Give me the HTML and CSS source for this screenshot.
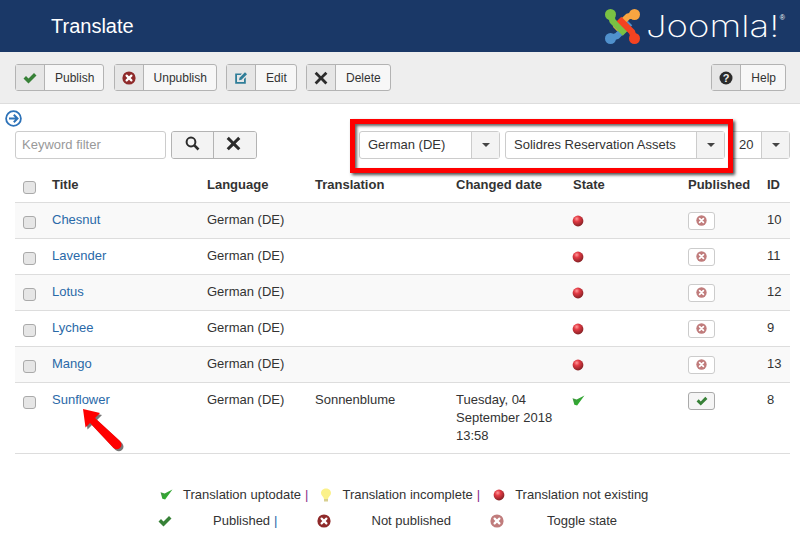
FILE: index.html
```html
<!DOCTYPE html>
<html lang="en">
<head>
<meta charset="utf-8">
<title>Translate</title>
<link rel="stylesheet" href="styles.css">
</head>
<body>
<svg class="defs" width="0" height="0" aria-hidden="true">
  <defs>
    <radialGradient id="ball" cx="0.38" cy="0.3" r="0.75">
      <stop offset="0" stop-color="#ff9a9a"/>
      <stop offset="0.35" stop-color="#e33a44"/>
      <stop offset="1" stop-color="#7c1f22"/>
    </radialGradient>
    <linearGradient id="greencheck" x1="0" y1="0" x2="1" y2="1">
      <stop offset="0" stop-color="#4a8a4a"/>
      <stop offset="1" stop-color="#1ec01e"/>
    </linearGradient>
    <symbol id="check" viewBox="0 0 14 12"><path d="M0.5 6.5 L3 4 L5.5 6.5 L11 1 L13.5 3.5 L5.5 11.5 Z" fill="currentColor"/></symbol>
    <symbol id="xcircle" viewBox="0 0 14 14"><circle cx="7" cy="7" r="6.6" fill="currentColor"/><path d="M4.6 4.6 L9.4 9.4 M9.4 4.6 L4.6 9.4" stroke="#fff" stroke-width="2.2" stroke-linecap="round"/></symbol>
    <symbol id="times" viewBox="0 0 14 14"><path d="M2.6 0.8 L7 5.2 L11.4 0.8 L13.4 2.8 L9 7.1 L13.4 11.4 L11.4 13.4 L7 9 L2.6 13.4 L0.6 11.4 L5 7.1 L0.6 2.8 Z" fill="currentColor"/></symbol>
    <symbol id="redball" viewBox="0 0 12 12"><circle cx="6" cy="6" r="5.4" fill="url(#ball)"/></symbol>
    <symbol id="tick" viewBox="0 0 14 12"><path d="M0.5 3.5 L5 5 L13.5 0.5 L5.5 11.5 L2.5 10.5 Z" fill="url(#greencheck)"/></symbol>
  </defs>
</svg>

<header class="topbar">
  <h1 class="page-title">Translate</h1>
  <div class="brand">
    <svg class="brand-mark" viewBox="0 0 37 37" width="37" height="37" aria-hidden="true">
      <g fill="none" stroke-width="6.4" stroke-linejoin="round">
        <path d="M7 30 L13 28 L26 15" stroke="#5091cd"/>
        <path d="M30 7 L24 8.5 L11 21" stroke="#f9a541"/>
        <path d="M7 7 L8.5 13 L21 25.5" stroke="#7ac143"/>
        <path d="M30 30 L28 24 L15 11" stroke="#f44321"/>
      </g>
      <circle cx="6.5" cy="6.5" r="5.5" fill="#7ac143"/>
      <circle cx="30.5" cy="6.5" r="5.5" fill="#f9a541"/>
      <circle cx="6.5" cy="30.5" r="5.5" fill="#5091cd"/>
      <circle cx="30.5" cy="30.5" r="5.5" fill="#f44321"/>
    </svg>
    <span class="brand-word">Joomla!</span><sup class="brand-reg">®</sup>
  </div>
</header>

<nav class="toolbar">
  <button class="tool"><span class="tool-icon c-green"><svg width="14" height="12"><use href="#check"/></svg></span><span class="tool-label">Publish</span></button>
  <button class="tool"><span class="tool-icon c-red"><svg width="14" height="14"><use href="#xcircle"/></svg></span><span class="tool-label">Unpublish</span></button>
  <button class="tool"><span class="tool-icon c-teal">
    <svg width="14" height="14" viewBox="0 0 14 14"><path d="M1.5 2.5 H8 L6.5 4 H3 V11 H10 V8 L11.8 6.2 V12.8 H1.2 V2.5 Z" fill="currentColor"/><path d="M5.5 6.8 L11 1.2 L13 3.2 L7.5 8.8 L5 9.3 Z" fill="currentColor"/></svg>
  </span><span class="tool-label">Edit</span></button>
  <button class="tool"><span class="tool-icon c-dark"><svg width="14" height="14"><use href="#times"/></svg></span><span class="tool-label">Delete</span></button>
  <button class="tool tool-end"><span class="tool-icon c-dark">
    <svg width="14" height="14" viewBox="0 0 14 14"><circle cx="7" cy="7" r="6.5" fill="currentColor"/><text x="7" y="10.6" text-anchor="middle" class="q-mark">?</text></svg>
  </span><span class="tool-label">Help</span></button>
</nav>

<main class="content">
  <div class="back-row">
    <svg width="17" height="17" viewBox="0 0 17 17"><circle cx="8.5" cy="8.5" r="7.4" fill="#fff" stroke="#2d72b8" stroke-width="1.8"/><path d="M4 8.5 H12 M8.8 4.8 L12.5 8.5 L8.8 12.2" fill="none" stroke="#2d72b8" stroke-width="2"/></svg>
  </div>
  <div class="filters">
    <div class="search">
      <input class="keyword" type="text" placeholder="Keyword filter">
      <div class="btn-group">
        <button class="icon-btn">
          <svg width="15" height="15" viewBox="0 0 15 15"><circle cx="6" cy="6" r="4.4" fill="none" stroke="#2b2b2b" stroke-width="2"/><path d="M9.4 9.4 L13.5 13.5" stroke="#2b2b2b" stroke-width="2.6"/></svg>
        </button>
        <button class="icon-btn c-dark"><svg width="15" height="15"><use href="#times"/></svg></button>
      </div>
    </div>
    <div class="selects">
      <div class="select s-lang"><span class="select-val">German (DE)</span><span class="select-arrow"></span></div>
      <div class="select s-type"><span class="select-val">Solidres Reservation Assets</span><span class="select-arrow"></span></div>
      <div class="select s-num"><span class="select-val">20</span><span class="select-arrow"></span></div>
    </div>
  </div>
  <div class="callout"></div>

  <table class="list">
    <colgroup>
      <col class="w-check"><col class="w-title"><col class="w-lang"><col class="w-trans"><col class="w-date"><col class="w-state"><col class="w-pub"><col class="w-id">
    </colgroup>
    <thead>
      <tr><th><span class="cb"></span></th><th>Title</th><th>Language</th><th>Translation</th><th>Changed date</th><th>State</th><th>Published</th><th>ID</th></tr>
    </thead>
    <tbody>
      <tr class="odd"><td class="cb-cell"><span class="cb"></span></td><td><a href="#">Chesnut</a></td><td>German (DE)</td><td></td><td></td><td class="ic"><svg width="12" height="12"><use href="#redball"/></svg></td><td class="pub"><span class="pill off"><svg width="11" height="11"><use href="#xcircle"/></svg></span></td><td>10</td></tr>
      <tr><td class="cb-cell"><span class="cb"></span></td><td><a href="#">Lavender</a></td><td>German (DE)</td><td></td><td></td><td class="ic"><svg width="12" height="12"><use href="#redball"/></svg></td><td class="pub"><span class="pill off"><svg width="11" height="11"><use href="#xcircle"/></svg></span></td><td>11</td></tr>
      <tr class="odd"><td class="cb-cell"><span class="cb"></span></td><td><a href="#">Lotus</a></td><td>German (DE)</td><td></td><td></td><td class="ic"><svg width="12" height="12"><use href="#redball"/></svg></td><td class="pub"><span class="pill off"><svg width="11" height="11"><use href="#xcircle"/></svg></span></td><td>12</td></tr>
      <tr><td class="cb-cell"><span class="cb"></span></td><td><a href="#">Lychee</a></td><td>German (DE)</td><td></td><td></td><td class="ic"><svg width="12" height="12"><use href="#redball"/></svg></td><td class="pub"><span class="pill off"><svg width="11" height="11"><use href="#xcircle"/></svg></span></td><td>9</td></tr>
      <tr class="odd"><td class="cb-cell"><span class="cb"></span></td><td><a href="#">Mango</a></td><td>German (DE)</td><td></td><td></td><td class="ic"><svg width="12" height="12"><use href="#redball"/></svg></td><td class="pub"><span class="pill off"><svg width="11" height="11"><use href="#xcircle"/></svg></span></td><td>13</td></tr>
      <tr class="last"><td class="cb-cell"><span class="cb"></span></td><td><a href="#">Sunflower</a></td><td>German (DE)</td><td>Sonnenblume</td><td class="date">Tuesday, 04 September 2018 13:58</td><td class="tick-cell"><svg width="13" height="11"><use href="#tick"/></svg></td><td class="pub"><span class="pill on"><svg width="12" height="10"><use href="#check"/></svg></span></td><td>8</td></tr>
    </tbody>
  </table>
  <svg class="arrow" width="48" height="48" viewBox="0 0 48 48" aria-hidden="true">
    <path d="M1 1 L18 5 L13 10 L38 33 Q41 37 38 40 Q35 42.5 31.5 40 L8 15 L3.5 19.5 Z" fill="#1c1c1c" opacity="0.6" transform="translate(2 2)"/>
    <path d="M1 1 L18 5 L13 10 L38 33 Q41 37 38 40 Q35 42.5 31.5 40 L8 15 L3.5 19.5 Z" fill="#f00"/>
  </svg>

  <div class="legend">
    <div class="legend-row r1">
      <svg class="lg-tick" width="13" height="11"><use href="#tick"/></svg><span class="lg-text">Translation uptodate</span><span class="sep-purple">|</span>
      <svg class="lg-bulb" width="12" height="14" viewBox="0 0 12 14"><path d="M6 0.5 C2.5 0.5 1 3 1 5 C1 7.5 3.5 8.5 4 11 H8 C8.5 8.5 11 7.5 11 5 C11 3 9.5 0.5 6 0.5 Z" fill="#fbf18a"/><rect x="4" y="11" width="4" height="2.5" fill="#d8cf90"/></svg><span class="lg-text">Translation incomplete</span><span class="sep-purple">|</span>
      <svg class="lg-ball" width="12" height="12"><use href="#redball"/></svg><span class="lg-text">Translation not existing</span>
    </div>
    <div class="legend-row r2">
      <svg class="c-green" width="14" height="12"><use href="#check"/></svg><span class="lg-text t-pub">Published</span><span class="sep-blue">|</span>
      <svg class="c-red x-red" width="14" height="14"><use href="#xcircle"/></svg><span class="lg-text t-not">Not published</span>
      <svg class="c-fade x-fade" width="14" height="14"><use href="#xcircle"/></svg><span class="lg-text t-tog">Toggle state</span>
    </div>
  </div>
</main>
</body>
</html>
```
FILE: styles.css
```css
* { box-sizing: border-box; }
html, body { margin: 0; padding: 0; }
body {
  width: 800px;
  height: 540px;
  overflow: hidden;
  background: #fff;
  color: #333;
  font-family: "Liberation Sans", Arial, sans-serif;
  font-size: 13px;
  line-height: 18px;
}
.defs { position: absolute; }
.c-green { color: #378137; }
.c-red { color: #8f2a2a; }
.c-teal { color: #2f7d98; }
.c-dark { color: #2b2b2b; }
.c-fade { color: #c07c7c; }

.topbar {
  height: 52px;
  background: #1a3867;
  display: flex;
  align-items: center;
  justify-content: space-between;
  padding: 0 15px 0 51px;
}
.page-title {
  margin: 0;
  color: #fff;
  font-size: 20px;
  font-weight: 400;
  line-height: 52px;
}
.brand { display: flex; align-items: center; color: #fff; }
.brand-mark { margin-right: 5px; }
.brand-word {
  display: block;
  width: 134px;
  font-family: "Inter", sans-serif;
  font-weight: 200;
  font-size: 30px;
  line-height: 52px;
  white-space: nowrap;
  transform: scaleX(1.22);
  transform-origin: left center;
}
.brand-reg { font-size: 7px; line-height: 8px; align-self: flex-start; margin-top: 14px; }

.toolbar {
  height: 52px;
  background: #eee;
  border-bottom: 1px solid #ddd;
  display: flex;
  align-items: center;
  gap: 9.2px;
  padding: 0 14px 0 15px;
}
.tool {
  display: flex;
  align-items: stretch;
  height: 27px;
  padding: 0;
  background: #f7f7f7;
  border: 1px solid #b3b3b3;
  border-radius: 3px;
  font: inherit;
  font-size: 12px;
  color: #333;
}
.tool-end { margin-left: auto; }
.tool-icon {
  width: 29px;
  background: #e6e6e6;
  border-right: 1px solid #b3b3b3;
  display: flex;
  align-items: center;
  justify-content: center;
}
.tool-label { padding: 0 9px 0 10px; line-height: 27px; }
.q-mark { fill: #eee; font-size: 11px; font-weight: 700; font-family: "Liberation Sans", sans-serif; }

.content { position: relative; padding: 0 10px 0 15px; }
.back-row { height: 27px; margin-left: -10px; padding-top: 6px; }
.back-row svg { display: block; }
.filters {
  display: flex;
  justify-content: space-between;
  height: 28px;
}
.search { display: flex; gap: 5px; }
.keyword {
  width: 151px;
  height: 28px;
  padding: 0 6px 2px;
  border: 1px solid #ccc;
  border-radius: 3px;
  font: inherit;
  color: #333;
}
.keyword::placeholder { color: #999; opacity: 1; }
.btn-group { display: flex; height: 28px; border: 1px solid #b3b3b3; border-radius: 3px; overflow: hidden; }
.icon-btn {
  width: 41px;
  padding: 0 0 3px;
  border: 0;
  background: #f3f3f3;
  display: flex;
  align-items: center;
  justify-content: center;
}
.icon-btn + .icon-btn { width: 43px; padding-right: 3px; border-left: 1px solid #b3b3b3; }
.selects { display: flex; gap: 5px; }
.select {
  display: flex;
  height: 28px;
  border: 1px solid #ccc;
  border-radius: 3px;
  background: #fff;
  line-height: 26px;
}
.s-lang { width: 141px; }
.s-type { width: 220px; }
.s-num { width: 60px; }
.select-val { flex: 1; padding-left: 8px; }
.select-arrow {
  width: 28px;
  background: #f3f3f3;
  border-left: 1px solid #ccc;
  position: relative;
}
.select-arrow::after {
  content: "";
  position: absolute;
  left: 10px;
  top: 11px;
  border: 4px solid transparent;
  border-top-color: #444;
  border-bottom: 0;
}
.callout {
  position: absolute;
  left: 350px;
  top: 15px;
  width: 383px;
  height: 54px;
  border: 5px solid #f00;
  box-shadow: 2px 2px 3px rgba(0,0,0,0.7), inset 2px 2px 3px rgba(0,0,0,0.6);
  pointer-events: none;
}

.list {
  width: 775px;
  margin-top: 11px;
  border-collapse: collapse;
  table-layout: fixed;
}
.w-check { width: 37px; }
.w-title { width: 155px; }
.w-lang { width: 108px; }
.w-trans { width: 141px; }
.w-date { width: 117px; }
.w-state { width: 115px; }
.w-pub { width: 79px; }
.w-id { width: 23px; }
.list th {
  height: 32px;
  padding: 0 0 2px;
  text-align: left;
  font-weight: 700;
  vertical-align: middle;
}
.list td {
  height: 36px;
  padding: 8px 0 0;
  border-top: 1px solid #ddd;
  vertical-align: top;
  line-height: 18px;
}
.list tr.odd td { background: #f9f9f9; }
.list tr.last td { height: 71px; border-bottom: 1px solid #ddd; }
.list a { color: #2a69a8; text-decoration: none; }
.cb {
  display: block;
  width: 13px;
  height: 13px;
  margin-left: 8px;
  margin-top: 5px;
  background: #e6e6e6;
  border: 1px solid #aaa;
  border-radius: 3px;
}
.list th .cb { margin-top: 6px; }
.ic svg, .tick-cell svg { display: block; margin: 4px 0 0 -1px; }
.pill {
  display: flex;
  align-items: center;
  justify-content: center;
  width: 27px;
  height: 18px;
  margin-top: 1px;
  border: 1px solid #ccc;
  border-radius: 3px;
  background: #fff;
}
.pill.off { color: #c07c7c; }
.pill.on { color: #378137; background: #f5f5f5; border-color: #aaa; }
.date { padding-right: 6px; }
.arrow { position: absolute; left: 82px; top: 304px; }

.legend { margin-top: 28px; }
.legend-row { display: flex; align-items: center; height: 26px; }
.legend-row.r1 { padding-left: 145px; }
.legend-row.r2 { padding-left: 143px; }
.lg-text { white-space: nowrap; }
.r1 .lg-text { margin-left: 10px; }
.sep-purple { color: #8a2b8a; margin: 0 12px 0 4px; }
.sep-blue { color: #2a69a8; margin: 0 39px 0 4px; }
.lg-ball { margin-left: 1px; }
.t-pub { margin-left: 41px; }
.t-not { margin-left: 41px; }
.x-fade { margin-left: 39px; }
.t-tog { margin-left: 43px; }
```
